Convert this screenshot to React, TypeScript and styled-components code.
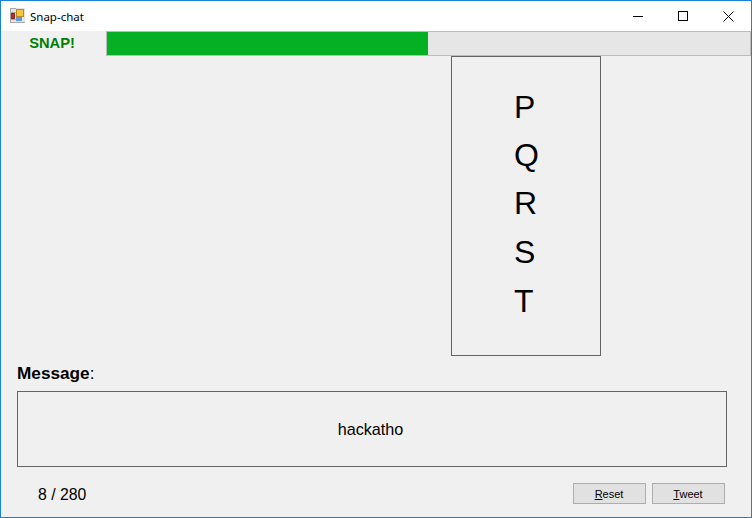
import { createGlobalStyle } from 'styled-components';
import styled from 'styled-components';

const GlobalStyle = createGlobalStyle`
  html, body {
    margin: 0;
    padding: 0;
    background: #f0f0f0;
  }
`;

const Window = styled.div`
  box-sizing: border-box;
  width: 752px;
  height: 518px;
  border: 1px solid #1883d7;
  background: #f0f0f0;
  display: flex;
  flex-direction: column;
  font-family: 'Liberation Sans', Arial, sans-serif;
  color: #000;
  overflow: hidden;
`;

const TitleBar = styled.div`
  height: 30px;
  background: #fff;
  display: flex;
  align-items: center;
  padding-left: 9px;
`;

const AppIcon = styled.svg`
  width: 16px;
  height: 16px;
  margin-right: 4px;
`;

const Title = styled.span`
  font-family: 'Noto Sans', sans-serif;
  font-size: 11.5px;
  flex: 1;
`;

const WinButton = styled.div`
  width: 45px;
  height: 30px;
  display: flex;
  align-items: center;
  justify-content: center;

  &:last-child {
    width: 46px;
  }
`;

const StatusStrip = styled.div`
  height: 25px;
  display: flex;
`;

const SnapLabel = styled.div`
  width: 105px;
  text-align: center;
  padding-right: 3px;
  box-sizing: border-box;
  line-height: 25px;
  font-size: 14.7px;
  font-weight: bold;
  color: #008000;
`;

const Track = styled.div`
  flex: 1;
  box-sizing: border-box;
  border: 1px solid #bcbcbc;
  background: #e6e6e6;
`;

const Fill = styled.div`
  height: 100%;
  background: #06b025;
`;

const LetterBox = styled.div`
  box-sizing: border-box;
  width: 150px;
  height: 300px;
  margin-left: 450px;
  border: 1px solid #646464;
  padding: 26px 0 0 62px;
  font-size: 32px;
`;

const Letter = styled.div<{ $tall?: boolean }>`
  line-height: 48px;
  margin-top: ${(p) => (p.$tall ? '1px' : '0')};
`;

const Label = styled.div`
  margin: 8px 0 0 16px;
  height: 27px;
  line-height: 18px;
  font-size: 17.2px;
`;

const MessageBox = styled.div`
  box-sizing: border-box;
  width: 710px;
  height: 76px;
  margin-left: 16px;
  padding: 0 3px 0 0;
  border: 1px solid #646464;
  display: flex;
  align-items: center;
  justify-content: center;
  font-size: 16.2px;
`;

const Footer = styled.div`
  display: flex;
  align-items: center;
  margin-top: 16px;
  padding-left: 37px;
  height: 21px;
`;

const Counter = styled.span`
  flex: 1;
  font-size: 15.8px;
  padding-top: 2px;
`;

const ActionButton = styled.div`
  box-sizing: border-box;
  width: 73px;
  height: 21px;
  margin-right: 6px;
  padding-right: 1px;
  border: 1px solid #adadad;
  background: #e1e1e1;
  font-size: 11px;
  line-height: 20px;
  text-align: center;

  &:last-child {
    margin-right: 26px;
  }
`;

const App = () => (
  <Window>
    <GlobalStyle />
    <TitleBar>
      <AppIcon viewBox="0 0 16 16">
        <rect x="0" y="0" width="15" height="15" fill="#e4e4e4" />
        <path d="M0 0.5H6M0.5 0V15M0 4.5H6M0 11.5H6M0 14.5H15" stroke="#a8a8a8" />
        <rect x="6.5" y="1.5" width="7" height="7" fill="#f5c63c" stroke="#b88a20" />
        <rect x="1.5" y="5.5" width="3" height="5" fill="#c22a22" stroke="#8a2a24" />
        <rect x="6" y="9" width="6" height="4" fill="#5c9ae6" />
      </AppIcon>
      <Title>Snap-chat</Title>
      <WinButton>
        <svg width="10" height="10" viewBox="0 0 10 10">
          <path d="M0 5.5H10" stroke="#000" />
        </svg>
      </WinButton>
      <WinButton>
        <svg width="10" height="10" viewBox="0 0 10 10">
          <rect x="0.5" y="0.5" width="9" height="9" fill="none" stroke="#000" />
        </svg>
      </WinButton>
      <WinButton>
        <svg width="11" height="11" viewBox="0 0 11 11">
          <path d="M0.5 0.5L10.5 10.5M10.5 0.5L0.5 10.5" stroke="#000" />
        </svg>
      </WinButton>
    </TitleBar>
    <StatusStrip>
      <SnapLabel>SNAP!</SnapLabel>
      <Track>
        <Fill style={{ width: '49.9%' }} />
      </Track>
    </StatusStrip>
    <LetterBox>
      <Letter>P</Letter>
      <Letter>Q</Letter>
      <Letter>R</Letter>
      <Letter $tall>S</Letter>
      <Letter $tall>T</Letter>
    </LetterBox>
    <Label>
      <b>Message</b>:
    </Label>
    <MessageBox>hackatho</MessageBox>
    <Footer>
      <Counter>8 / 280</Counter>
      <ActionButton>
        <u>R</u>eset
      </ActionButton>
      <ActionButton>
        <u>T</u>weet
      </ActionButton>
    </Footer>
  </Window>
);

export default App;
